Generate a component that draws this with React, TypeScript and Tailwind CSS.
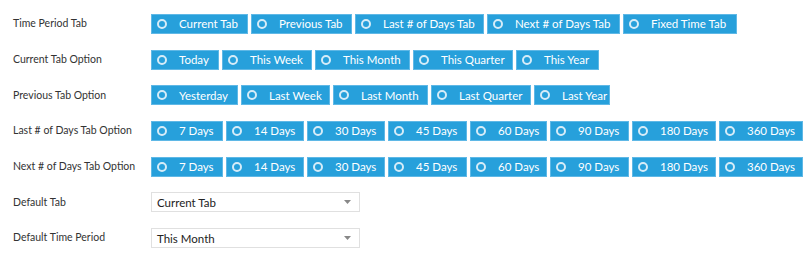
import React from "react";

type Opt = { label: string; w: string };

const rows: { label: string; opts: Opt[] }[] = [
  {
    label: "Time Period Tab",
    opts: [
      { label: "Current Tab", w: "w-[97px]" },
      { label: "Previous Tab", w: "w-[101px]" },
      { label: "Last # of Days Tab", w: "w-[129px]" },
      { label: "Next # of Days Tab", w: "w-[133px]" },
      { label: "Fixed Time Tab", w: "w-[114px]" },
    ],
  },
  {
    label: "Current Tab Option",
    opts: [
      { label: "Today", w: "w-[68px]" },
      { label: "This Week", w: "w-[90px]" },
      { label: "This Month", w: "w-[95px]" },
      { label: "This Quarter", w: "w-[100px]" },
      { label: "This Year", w: "w-[83px]" },
    ],
  },
  {
    label: "Previous Tab Option",
    opts: [
      { label: "Yesterday", w: "w-[87px]" },
      { label: "Last Week", w: "w-[89px]" },
      { label: "Last Month", w: "w-[95px]" },
      { label: "Last Quarter", w: "w-[100px]" },
      { label: "Last Year", w: "w-[76px]" },
    ],
  },
  {
    label: "Last # of Days Tab Option",
    opts: [
      { label: "7 Days", w: "w-[72px]" },
      { label: "14 Days", w: "w-[78px]" },
      { label: "30 Days", w: "w-[78px]" },
      { label: "45 Days", w: "w-[79px]" },
      { label: "60 Days", w: "w-[77px]" },
      { label: "90 Days", w: "w-[79px]" },
      { label: "180 Days", w: "w-[84px]" },
      { label: "360 Days", w: "w-[84px]" },
    ],
  },
  {
    label: "Next # of Days Tab Option",
    opts: [
      { label: "7 Days", w: "w-[72px]" },
      { label: "14 Days", w: "w-[78px]" },
      { label: "30 Days", w: "w-[78px]" },
      { label: "45 Days", w: "w-[79px]" },
      { label: "60 Days", w: "w-[77px]" },
      { label: "90 Days", w: "w-[79px]" },
      { label: "180 Days", w: "w-[84px]" },
      { label: "360 Days", w: "w-[84px]" },
    ],
  },
];

function Radio({ opt }: { opt: Opt }) {
  return (
    <div
      className={`${opt.w} h-[20px] shrink-0 flex items-center bg-[#27a0db] border border-[#5fb8e6] pl-[5px] text-white text-[11.5px] leading-none`}
    >
      <span className="w-[10px] h-[10px] rounded-full border-[2px] border-[#d6ecf8] shrink-0" />
      <span className="ml-[12px] whitespace-nowrap">{opt.label}</span>
    </div>
  );
}

function Select({ value }: { value: string }) {
  return (
    <div className="w-[209px] h-[20px] border border-[#e0e0e0] bg-white flex items-center justify-between pl-[5px] pr-[8px] text-[11.5px] text-[#222]">
      <span>{value}</span>
      <svg width="7" height="4" viewBox="0 0 7 4">
        <path d="M0 0 L7 0 L3.5 4 Z" fill="#888" />
      </svg>
    </div>
  );
}

function Label({ children }: { children: React.ReactNode }) {
  return (
    <div className="w-[138px] shrink-0 text-[10.5px] text-[#333] whitespace-nowrap">
      {children}
    </div>
  );
}

export default function App() {
  return (
    <div
      className="w-[809px] h-[258px] bg-white pt-[14px] pl-[13px] flex flex-col gap-[15.7px]"
      style={{ fontFamily: "Lato, 'Open Sans', sans-serif" }}
    >
      {rows.map((r) => (
        <div key={r.label} className="flex items-center h-[20px]">
          <Label>{r.label}</Label>
          <div className="flex gap-[3px]">
            {r.opts.map((o) => (
              <Radio key={o.label} opt={o} />
            ))}
          </div>
        </div>
      ))}
      <div className="flex items-center h-[20px]">
        <Label>Default Tab</Label>
        <Select value="Current Tab" />
      </div>
      <div className="flex items-center h-[20px]">
        <Label>Default Time Period</Label>
        <Select value="This Month" />
      </div>
    </div>
  );
}
